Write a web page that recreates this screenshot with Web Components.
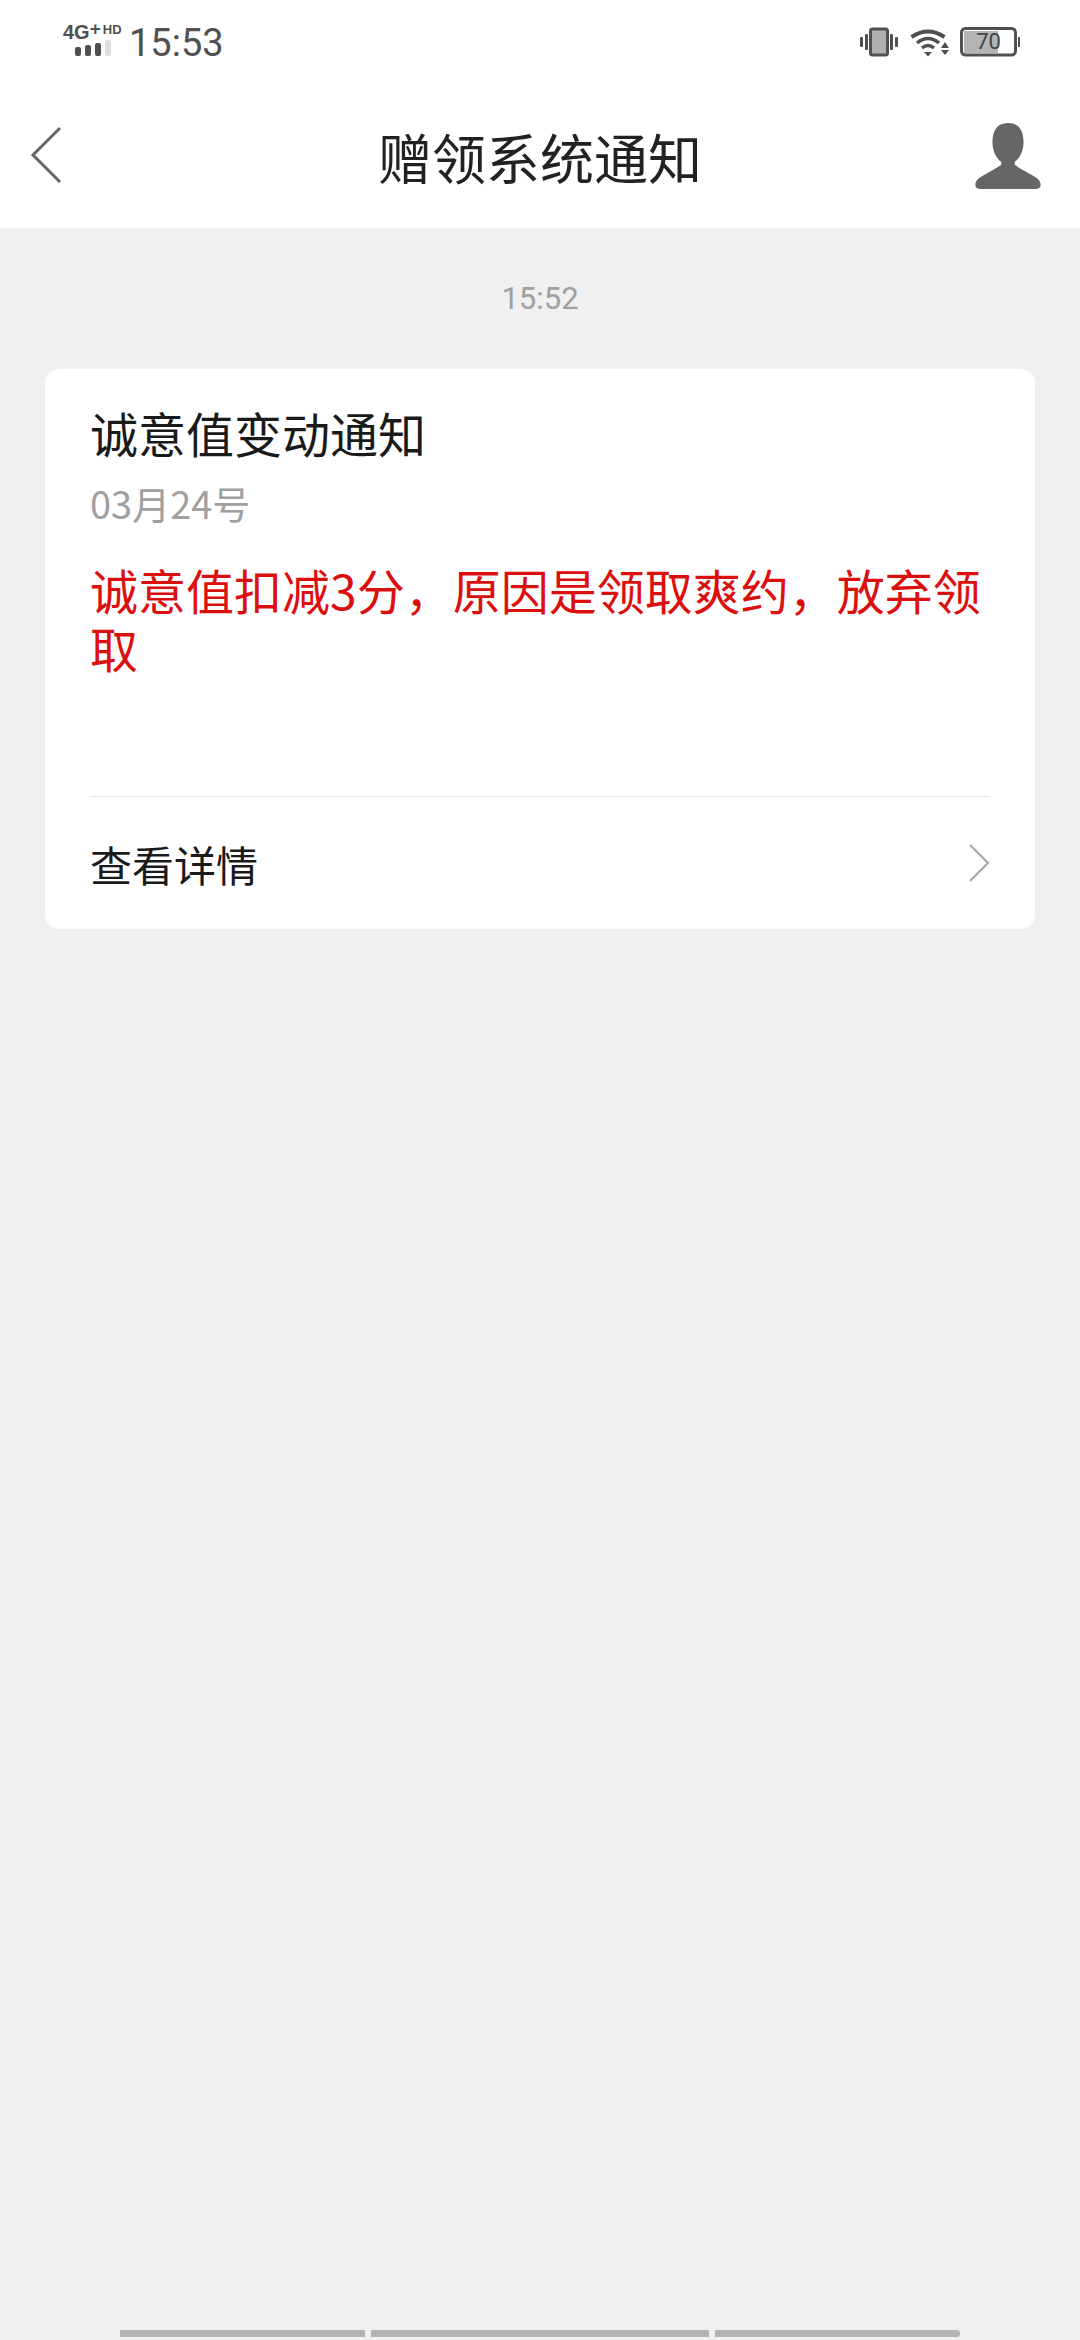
<!DOCTYPE html>
<html lang="zh">
<head>
<meta charset="utf-8">
<title>赠领系统通知</title>
<style>
    html, body { margin: 0; padding: 0; }
    body { background: #f0f0f0; font-family: "Noto Sans CJK SC", "Noto Sans", sans-serif; }
</style>
</head>
<body>
<notice-screen>
    <status-bar slot="top"></status-bar>
    <nav-bar slot="top" title="赠领系统通知"></nav-bar>
    <notice-card time="15:52" heading="诚意值变动通知" date="03月24号" link="查看详情">诚意值扣减3分，原因是领取爽约，放弃领取</notice-card>
    <gesture-bar slot="bottom"></gesture-bar>
</notice-screen>
<script>
class NoticeScreen extends HTMLElement {
    constructor() {
        super();
        this.attachShadow({ mode: 'open' });
        this.shadowRoot.innerHTML = `
            <style>
                :host { display: flex; flex-direction: column; height: 2340px; background: #f0f0f0; overflow: hidden; }
                main { flex: 1; }
            </style>
            <slot name="top"></slot>
            <main><slot></slot></main>
            <slot name="bottom"></slot>
        `;
    }
}

class StatusBar extends HTMLElement {
    constructor() {
        super();
        this.attachShadow({ mode: 'open' });
        this.shadowRoot.innerHTML = `
            <style>
                :host { display: flex; align-items: flex-start; justify-content: space-between; height: 84px; background: #fff; padding: 0 60px 0 63px; box-sizing: border-box; color: #505050; }
                .left, .right { display: flex; align-items: flex-start; }
                .right { margin-top: 27px; }
                .net { width: 66px; margin-top: 22px; }
                .net-text { display: flex; height: 20px; font: 700 20px/20px "Liberation Sans", sans-serif; white-space: nowrap; }
                .net-text .plus { font-size: 19px; line-height: 14px; margin-left: 0; }
                .net-text .hd { font-size: 13px; line-height: 16px; margin-left: 2px; }
                .bars { display: flex; gap: 4px; margin: -2px 0 0 12px; height: 16px; align-items: flex-end; }
                .bars i { width: 6px; border-radius: 2px; background: #505050; }
                .clock { font: 38px/44px Roboto, sans-serif; margin-top: 21px; }
                svg { display: block; }
                .wifi { margin-left: 12px; }
                .battery { margin-left: 11px; position: relative; width: 60px; height: 30px; }
                .battery .pct { position: absolute; left: 0; top: 0; width: 57px; text-align: center; font: 22px/30px Roboto, sans-serif; color: #444; }
            </style>
            <div class="left">
                <div class="net">
                    <div class="net-text"><span>4G</span><span class="plus">+</span><span class="hd">HD</span></div>
                    <div class="bars">
                        <i style="height:9px"></i><i style="height:11px"></i><i style="height:13px"></i><i style="height:16px;background:#ddd"></i>
                    </div>
                </div>
                <div class="clock">15:53</div>
            </div>
            <div class="right">
                <svg width="38" height="30" viewBox="0 0 38 30">
                    <rect x="10.5" y="2" width="17" height="26" rx="2" fill="#b0b0b0" stroke="#505050" stroke-width="3"/>
                    <rect x="0" y="10" width="3" height="10" rx="1" fill="#505050"/>
                    <rect x="5" y="7" width="3" height="16" rx="1" fill="#505050"/>
                    <rect x="30" y="7" width="3" height="16" rx="1" fill="#505050"/>
                    <rect x="35" y="10" width="3" height="10" rx="1" fill="#505050"/>
                </svg>
                <svg class="wifi" width="39" height="30" viewBox="0 0 39 30">
                    <path d="M1.500 10 Q18 -1 34.500 10" fill="none" stroke="#505050" stroke-width="4"/>
                    <path d="M7 16 Q18 7 29 16" fill="none" stroke="#505050" stroke-width="3.500"/>
                    <path d="M12 21 Q18 16 24 21" fill="none" stroke="#505050" stroke-width="3.500"/>
                    <path d="M14 25 L22 25 L18 29.500 Z" fill="#505050"/>
                    <path d="M35 15 L39 21 L31 21 Z M31 23 L39 23 L35 28 Z" fill="#505050"/>
                </svg>
                <div class="battery">
                    <svg width="60" height="30" viewBox="0 0 60 30">
                        <rect x="4" y="4" width="34" height="22" fill="#b4b4b4"/>
                        <rect x="1.500" y="1.500" width="54" height="26.500" rx="4" fill="none" stroke="#505050" stroke-width="3"/>
                        <rect x="58" y="10" width="2" height="10" fill="#505050"/>
                    </svg>
                    <div class="pct">70</div>
                </div>
            </div>
        `;
    }
}

class NavBar extends HTMLElement {
    constructor() {
        super();
        this.attachShadow({ mode: 'open' });
        this.shadowRoot.innerHTML = `
            <style>
                :host { display: grid; grid-template-columns: 1fr auto 1fr; align-items: center; height: 144px; background: #fff; padding: 0 38px; box-sizing: border-box; }
                h1 { margin: 0; font-size: 54px; font-weight: 400; line-height: 70px; color: #222; padding-top: 2px; }
                svg { display: block; }
                .avatar { justify-self: end; }
                .back { margin: -2px 0 0 -8px; }
            </style>
            <svg class="back" width="32" height="58" viewBox="0 0 32 58"><path d="M30 2 L3 29 L30 56" fill="none" stroke="#666" stroke-width="3"/></svg>
            <h1>${this.getAttribute('title')}</h1>
            <svg class="avatar" width="68" height="68" viewBox="0 0 70 70"><path d="M35 1 C47 1 51 10 51 21 C51 31 46 38 42 41 L42 44 C47 48 58 53 65 58 C70 62 70 69 64 69 L6 69 C0 69 0 62 5 58 C12 53 23 48 28 44 L28 41 C24 38 19 31 19 21 C19 10 23 1 35 1 Z" fill="#666"/></svg>
        `;
    }
}

class NoticeCard extends HTMLElement {
    constructor() {
        super();
        this.attachShadow({ mode: 'open' });
        this.shadowRoot.innerHTML = `
            <style>
                :host { display: block; padding: 0 45px; }
                .time { text-align: center; font: 31px/36px Roboto, sans-serif; color: #a0a0a0; padding: 53px 0 52px; }
                .card { background: #fff; border-radius: 14px; padding: 0 45px; }
                h2 { margin: 0; padding-top: 31px; font-size: 48px; font-weight: 400; line-height: 64px; color: #1a1a1a; }
                .date { font-size: 38px; line-height: 48px; color: #a0a0a0; margin-top: 15px; }
                .body { font-size: 48px; line-height: 58px; color: #dc0f0f; margin-top: 33px; height: 236px; }
                .foot { display: flex; align-items: center; justify-content: space-between; height: 132px; border-top: 1px solid #e6e6e6; font-size: 42px; color: #1a1a1a; }
                svg { display: block; }
            </style>
            <div class="time">${this.getAttribute('time')}</div>
            <div class="card">
                <h2>${this.getAttribute('heading')}</h2>
                <div class="date">${this.getAttribute('date')}</div>
                <div class="body"><slot></slot></div>
                <div class="foot">
                    <span>${this.getAttribute('link')}</span>
                    <svg width="21" height="38" viewBox="0 0 21 38"><path d="M1 1 L19 19 L1 37" fill="none" stroke="#a8a8a8" stroke-width="2.200"/></svg>
                </div>
            </div>
        `;
    }
}

class GestureBar extends HTMLElement {
    constructor() {
        super();
        this.attachShadow({ mode: 'open' });
        this.shadowRoot.innerHTML = `
            <style>
                :host { display: grid; grid-template-columns: 245px 338px 245px; gap: 6px; justify-content: center; padding-bottom: 3px; }
                i { height: 7px; background: #b4b4b4; }
                i:first-child { border-radius: 4px 0 0 4px; }
                i:last-child { border-radius: 0 4px 4px 0; }
            </style>
            <i></i><i></i><i></i>
        `;
    }
}

customElements.define('notice-screen', NoticeScreen);
customElements.define('status-bar', StatusBar);
customElements.define('nav-bar', NavBar);
customElements.define('notice-card', NoticeCard);
customElements.define('gesture-bar', GestureBar);
</script>
</body>
</html>
